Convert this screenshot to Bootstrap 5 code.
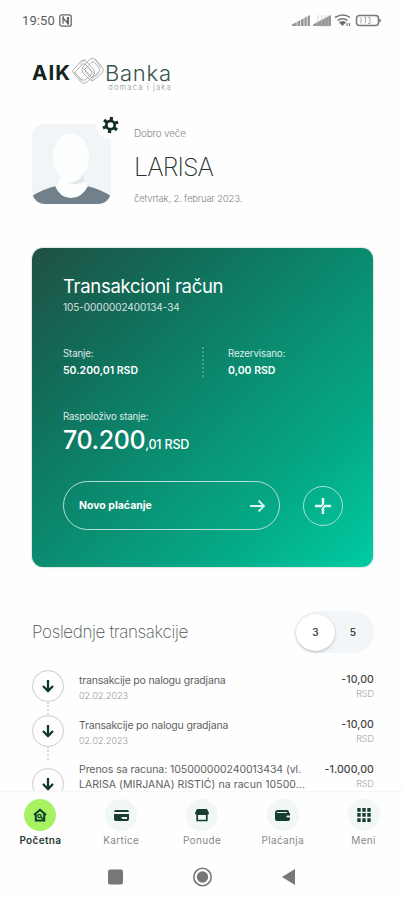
<!DOCTYPE html>
<html lang="sr-Latn">
<head>
<meta charset="utf-8">
<meta name="viewport" content="width=device-width, initial-scale=1">
<title>AIK Banka</title>
<link href="https://cdn.jsdelivr.net/npm/bootstrap@5.3.0/dist/css/bootstrap.min.css" rel="stylesheet">
<style>
body{font-family:Inter,"Liberation Sans",sans-serif;color:#777;background:#fefefe;font-size:10px}
.phone{width:404px;height:900px}
.status{height:40px;padding:0 22px}
.clock{font-family:Roboto,sans-serif;font-size:13px;line-height:15px;color:#5c5c5c;letter-spacing:.1px}
.brand{height:35px;margin:16px 0 0 32px}
.brand-a{font-size:20.5px;line-height:34px;font-weight:700;color:#12241f;letter-spacing:1.1px;width:39px}
.brand-b{font-size:22px;line-height:20px;font-weight:300;color:#38534b;letter-spacing:.75px;padding-top:7px;margin-right:-1px}
.brand-c{font-size:7.5px;line-height:9px;color:#8c9491;letter-spacing:1.2px;font-weight:300;margin-right:-1px}
.profile{margin:33px 0 0 32px;height:82px}
.portrait{width:90px}
.who{margin-left:12px}
.hello{font-size:10px;line-height:14px;margin-top:2px;color:#858585;font-weight:300;letter-spacing:-.2px}
.name{font-size:25px;line-height:32px;font-weight:200;color:#29332f;margin-top:11px;letter-spacing:-.9px}
.today{font-size:9.5px;line-height:14px;margin-top:9px;color:#858585;font-weight:300;letter-spacing:-.18px}
.account{margin:42px 31px 0 32px;height:319px;border-radius:11px;padding:27px 30px 0 31px;color:#fff;background:linear-gradient(137deg,#205044 0%,#126b57 23%,#0a8e72 52%,#05a886 75%,#00cca2 100%);box-shadow:0 0 2px #8bb5a8}
.acc-title{font-size:18.5px;line-height:22px;letter-spacing:-.3px}
.acc-no{font-size:10px;line-height:14px;margin-top:3px;opacity:.82;letter-spacing:-.05px}
.balances{margin-top:33px;height:32px}
.bal{width:139px}
.dots{width:0;border-left:2px dotted #5ea998;opacity:.75;height:30px;margin-right:24px}
.cap{font-size:9.7px;line-height:14px;opacity:.85;letter-spacing:-.15px}
.amt{font-size:10.5px;line-height:14px;font-weight:600;margin-top:3px;letter-spacing:0}
.avail{margin-top:31px}
.total{font-size:25px;line-height:28px;font-weight:500;margin-top:2px;letter-spacing:-.4px}
.total span{font-size:12.5px;letter-spacing:-.2px}
.actions{margin-top:22px}
.pay{width:217px;height:49px;border:1.3px solid #b5e0d5;padding:0 13px 0 15px;color:#fff;font-size:10.5px;font-weight:700;letter-spacing:0}
.add{width:40px;height:40px;border:1.2px solid #a7e3d5;padding:0}
.latest{margin:44px 30px 0 32px;height:42px}
.latest-title{font-size:17px;line-height:24px;font-weight:200;color:#4c5551;letter-spacing:-.35px}
.count{width:78px;height:42px;background:#f2f6f9;color:#404843;font-weight:600;font-size:10px}
.count-on{width:39px;height:37px;background:#fff;box-shadow:0 1px 3px #afb7bb}
.count-off{width:36px}
.feed{margin:17px 30px 0 32px;height:121px}
.ring{width:32px;height:32px;border:1.3px solid #cdcdcd}
.rail{width:32px}
.link{height:13px;width:2px;border-left:2px dotted #ddd}
.tx{height:45px}
.tx-body{margin-left:15px;padding-top:3px;width:230px}
.tx-title{font-size:10.5px;line-height:15px;color:#626262;letter-spacing:-.19px}
.tx-long{letter-spacing:-.06px;margin-top:-1px}
.tx-tail{letter-spacing:.06px}
.tx-sub{font-size:9px;line-height:12px;margin-top:2px;color:#969696;font-weight:300}
.tx-amt{font-size:10.5px;line-height:15px;color:#444;font-weight:500;letter-spacing:.1px;padding-top:2px}
.tx-cur{font-size:9px;line-height:12px;color:#a0a0a0;font-weight:300;margin-top:1px}
.tabs{height:63px;padding-top:7px;border-top:1px solid #f7f7f7}
.tab{width:81px;font-size:10px;line-height:14px;color:#888;letter-spacing:.35px}
.tab-on{color:#273a33;font-weight:600}
.disc{width:32px;height:32px;background:#f1f6f7;margin-bottom:2px}
.tab-on .disc{background:#a6f263}
.system{height:46px}
svg{display:block;flex:none}
</style>
</head>
<body>
<main class="phone overflow-hidden d-flex flex-column">
<div class="status d-flex align-items-center">
<span class="clock">19:50</span>
<svg class="ms-1" width="13" height="13" viewBox="0 0 13 13" fill="none" stroke="#666" stroke-width="1.3"><rect x=".8" y=".8" width="11.4" height="11.4" rx="2"/><path d="M4 9.8V4l4.5 5V3M4 3h1M8 9.8h1.4V3"/></svg>
<svg class="ms-auto" width="90" height="16" viewBox="0 0 90 16"><g fill="#979797"><path d="M0 14v-1.5L18 3v11zM21 14v-1.5L39 3v11z"/></g><path d="M5 3v12M8.5 3v12M12 3v12M15.2 3v12" stroke="#f8f8f8" stroke-width=".8"/><path d="M26 3v12M29.500 3v12M33 3v12M36.200 3v12" stroke="#c0c0c0" stroke-width=".6"/><g fill="none" stroke="#777" stroke-width="1.5"><path d="M43 5.500q8-5 15 0M45.500 8.300q5-3.300 10 0"/><path d="M48 10.500q2.500-1.500 5 0L50.500 13z" fill="#555"/><path d="M55 11v3M57.500 11v3" stroke-width="1.200"/><rect x="64.500" y="3.500" width="22" height="10" rx="3"/><path d="M88 7v3"/></g><path d="M69 5.500v6M72 5.500h2l-1 6M76 5.500h2v6h-2" fill="none" stroke="#aaa"/></svg>
</div>
<header class="brand d-flex">
<span class="brand-a">AIK</span>
<svg width="34" height="32" viewBox="0 0 34 32" fill="none" stroke="#b0b4b2" stroke-width="1"><path d="M2 14 10 5q3-2 6 1l7 8q2 3-1 6l-6 6q-3 3-6 0L3 18q-2-2-1-4z"/><path d="m5 15 7-7q2-1 3 1l5 6q2 2 0 4l-6 5q-2 1-4-1l-5-5q-1-2 0-3z"/><path d="m12 11 7-8q3-2 6 1l6 7q3 3 0 6l-8 7q-3 2-5-1l-6-6q-2-3 0-6z"/><path d="m15 12 6-6q2-1 3 1l4 5q2 2 0 4l-6 5q-2 1-4-1l-4-5q-1-2 1-3z"/><path d="m3 16 8 9M14 3l-5 6M24 3l6 9M20 24l8-7M11 11l8 8M14 8l9 9" stroke="#999" stroke-width=".6"/></svg>
<div class="d-flex flex-column align-items-end"><span class="brand-b">Banka</span><span class="brand-c text-nowrap">domaća i jaka</span></div>
</header>
<section class="profile d-flex">
<svg class="portrait" width="90" height="88" viewBox="0 0 90 88" overflow="visible"><defs><clipPath id="face"><rect width="79" height="80" rx="13"/></clipPath></defs><g clip-path="url(#face)"><path d="M0 0h79v82H0z" fill="#f1f5f8"/><path d="M0 82V72q11-7 24-10h31q13 3 24 10v10z" fill="#71808a"/><path d="M23 62q4-1 5-9h24q0 8 4 9-6 12-17 12T23 62z" fill="#fdfefe"/><path d="M34 58q12 2 18-9v9q-8 4-18 0z" fill="#e3e8eb"/><ellipse cx="39" cy="33" rx="18" ry="23.500" fill="#fdfefe"/></g><circle cx="78" cy="1" r="14" fill="#fefefe"/><g transform="translate(78.500 1)"><circle r="4.200" fill="none" stroke="#112c25" stroke-width="2.700"/><path d="M0-8v3M0 8V5M7-4 4.500-2.500M7 4 4.500 2.500M-7-4l2.500 1.500M-7 4l2.500-1.500" stroke="#112c25" stroke-width="3.200" transform="rotate(8)"/></g></svg>
<div class="who text-nowrap"><div class="hello">Dobro veče</div><div class="name">LARISA</div><div class="today">četvrtak, 2. februar 2023.</div></div>
</section>
<section class="account text-nowrap">
<div class="acc-title">Transakcioni račun</div>
<div class="acc-no">105-0000002400134-34</div>
<div class="balances d-flex">
<div class="bal"><div class="cap">Stanje:</div><div class="amt">50.200,01 RSD</div></div>
<div class="dots"></div>
<div><div class="cap">Rezervisano:</div><div class="amt">0,00 RSD</div></div>
</div>
<div class="avail"><div class="cap">Raspoloživo stanje:</div><div class="total">70.200<span>,01 RSD</span></div></div>
<div class="actions d-flex align-items-center justify-content-between">
<button class="pay btn rounded-pill d-flex align-items-center justify-content-between">Novo plaćanje<svg width="17" height="16" viewBox="0 0 17 16" fill="none" stroke="#d9f6ef" stroke-width="1.800"><path d="M1 8h14M9.500 2.500 15 8l-5.500 5.500"/></svg></button>
<button class="add btn rounded-circle d-flex align-items-center justify-content-center"><svg width="18" height="18" viewBox="0 0 18 18" fill="none"><path d="M9 1v16M1 9h16" stroke="#e3fbf5" stroke-width="2.500"/><path d="m6.500 11.500 5-5" stroke="#06a887" stroke-width="1"/></svg></button>
</div>
</section>
<section class="latest d-flex align-items-center justify-content-between">
<div class="latest-title text-nowrap">Poslednje transakcije</div>
<div class="count rounded-pill d-flex align-items-center"><span class="count-on rounded-circle d-flex align-items-center justify-content-center">3</span><span class="count-off text-center">5</span></div>
</section>
<section class="feed overflow-hidden text-nowrap">
<div class="tx d-flex"><div class="rail d-flex flex-column align-items-center"><div class="ring rounded-circle d-flex align-items-center justify-content-center flex-shrink-0"><svg width="14" height="14" viewBox="0 0 14 14" fill="none" stroke="#12372d" stroke-width="2.300"><path d="M7 1v11M2 7l5 5 5-5"/></svg></div><div class="link"></div></div><div class="tx-body"><div class="tx-title">transakcije po nalogu gradjana</div><div class="tx-sub">02.02.2023</div></div><div class="ms-auto text-end"><div class="tx-amt">-10,00</div><div class="tx-cur">RSD</div></div></div>
<div class="tx d-flex"><div class="rail d-flex flex-column align-items-center"><div class="ring rounded-circle d-flex align-items-center justify-content-center flex-shrink-0"><svg width="14" height="14" viewBox="0 0 14 14" fill="none" stroke="#12372d" stroke-width="2.300"><path d="M7 1v11M2 7l5 5 5-5"/></svg></div><div class="link"></div></div><div class="tx-body"><div class="tx-title">Transakcije po nalogu gradjana</div><div class="tx-sub">02.02.2023</div></div><div class="ms-auto text-end"><div class="tx-amt">-10,00</div><div class="tx-cur">RSD</div></div></div>
<div class="tx d-flex"><div class="rail d-flex flex-column align-items-center pt-2"><div class="ring rounded-circle d-flex align-items-center justify-content-center flex-shrink-0"><svg width="14" height="14" viewBox="0 0 14 14" fill="none" stroke="#12372d" stroke-width="2.300"><path d="M7 1v11M2 7l5 5 5-5"/></svg></div></div><div class="tx-body"><div class="tx-title tx-long">Prenos sa racuna: 105000000240013434 (vl.<br><span class="tx-tail">LARISA (MIRJANA) RISTIĆ) na racun 10500...</span></div></div><div class="ms-auto text-end"><div class="tx-amt">-1.000,00</div><div class="tx-cur">RSD</div></div></div>
</section>
<nav class="tabs d-flex text-center">
<div class="tab tab-on d-flex flex-column align-items-center"><span class="disc rounded-circle d-flex align-items-center justify-content-center"><svg width="14" height="14" viewBox="0 0 14 14" fill="none" stroke="#123b2c" stroke-width="2"><path d="M1 7 7 1.800 13 7M2.800 6v6.500h8.400V6"/><circle cx="6.500" cy="8" r="1.700" stroke-width="1.200"/><path d="m8 9 3 3" stroke-width="1.400"/></svg></span>Početna</div>
<div class="tab d-flex flex-column align-items-center"><span class="disc rounded-circle d-flex align-items-center justify-content-center"><svg width="15" height="13" viewBox="0 0 15 13"><path d="M0 3q0-2 2-2h11q2 0 2 2zM0 5h15v5q0 2-2 2H2q-2 0-2-2z" fill="#173c32"/><path d="M7 8h6v2H9q-1 0-2-2z" fill="#eef4f4"/></svg></span>Kartice</div>
<div class="tab d-flex flex-column align-items-center"><span class="disc rounded-circle d-flex align-items-center justify-content-center"><svg width="14" height="13" viewBox="0 0 14 13"><path d="M2 0h10l2 4q0 2-2 2H2Q0 6 0 4z" fill="#173c32"/><path d="M2.200 6v5.500h9.600V6" fill="none" stroke="#173c32" stroke-width="1.700"/></svg></span>Ponude</div>
<div class="tab d-flex flex-column align-items-center"><span class="disc rounded-circle d-flex align-items-center justify-content-center"><svg width="15" height="13" viewBox="0 0 15 13"><path d="M0 4q0-3 3-3h9q2 0 2 2v1h1v6q0 2-2 2H3q-3 0-3-2z" fill="#173c32"/><path d="M2 3.500h10" stroke="#dfe9e7"/><path d="M15 6.500h-3q-1.500 1 0 2h3z" fill="#dfe9e7"/></svg></span>Plaćanja</div>
<div class="tab d-flex flex-column align-items-center"><span class="disc rounded-circle d-flex align-items-center justify-content-center"><svg width="14" height="14" viewBox="0 0 14 14"><path d="M2 0v14M7 0v14M12 0v14" stroke="#173c32" stroke-width="3.400" stroke-dasharray="3.700 1.400"/></svg></span>Meni</div>
</nav>
<div class="system d-flex align-items-center justify-content-center">
<svg width="188" height="20" viewBox="0 0 188 20"><rect y="2.500" width="15" height="15" rx="2" fill="#777"/><circle cx="94.500" cy="10" r="8.700" fill="none" stroke="#777" stroke-width="1.600"/><circle cx="94.500" cy="10" r="5.700" fill="#777"/><path d="m174 10 13-8v16z" fill="#777"/></svg>
</div>
</main>
<script src="https://cdn.jsdelivr.net/npm/bootstrap@5.3.0/dist/js/bootstrap.bundle.min.js"></script>
</body>
</html>
